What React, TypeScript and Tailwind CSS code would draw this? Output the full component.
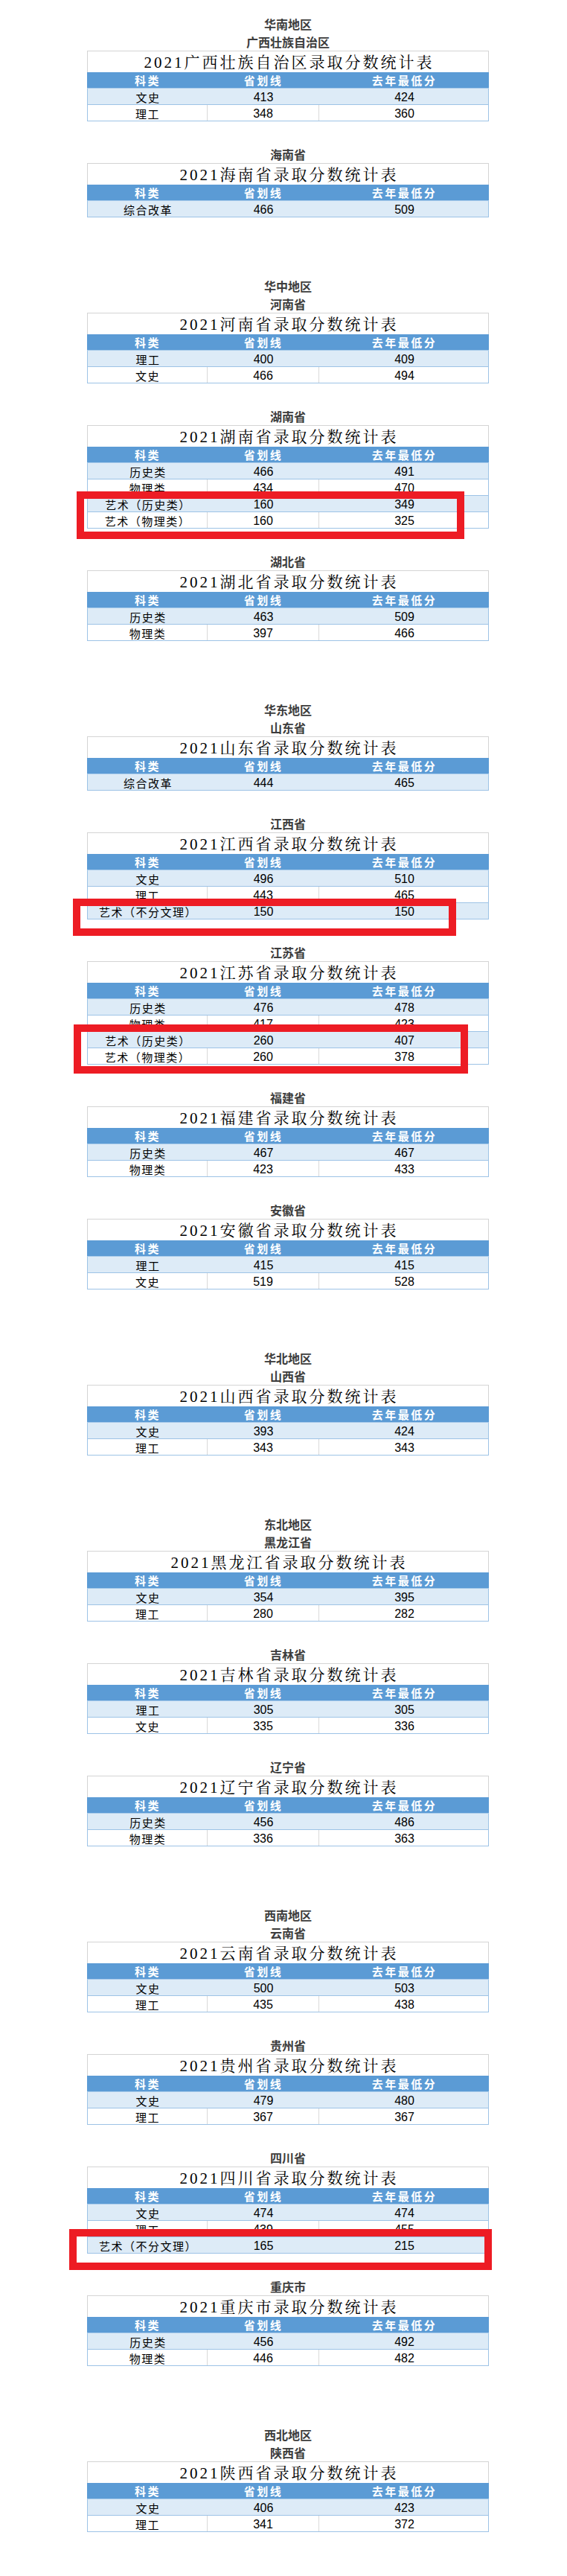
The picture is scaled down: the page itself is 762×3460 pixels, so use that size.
import React from "react";

type Row = [string, string, string];
type Mark = string;
type Province = { name: string; title: string; rows: Row[]; mark?: Mark };
type Region = { name: string; provinces: Province[] };

const regions: Region[] = [
  {
    name: "华南地区",
    provinces: [
      {
        name: "广西壮族自治区",
        title: "2021广西壮族自治区录取分数统计表",
        rows: [
          ["文史", "413", "424"],
          ["理工", "348", "360"],
        ],
      },
      {
        name: "海南省",
        title: "2021海南省录取分数统计表",
        rows: [["综合改革", "466", "509"]],
      },
    ],
  },
  {
    name: "华中地区",
    provinces: [
      {
        name: "河南省",
        title: "2021河南省录取分数统计表",
        rows: [
          ["理工", "400", "409"],
          ["文史", "466", "494"],
        ],
      },
      {
        name: "湖南省",
        title: "2021湖南省录取分数统计表",
        rows: [
          ["历史类", "466", "491"],
          ["物理类", "434", "470"],
          ["艺术（历史类）", "160", "349"],
          ["艺术（物理类）", "160", "325"],
        ],
        mark: "left-[-14px] top-[89px] w-[521px] h-[64px]",
      },
      {
        name: "湖北省",
        title: "2021湖北省录取分数统计表",
        rows: [
          ["历史类", "463", "509"],
          ["物理类", "397", "466"],
        ],
      },
    ],
  },
  {
    name: "华东地区",
    provinces: [
      {
        name: "山东省",
        title: "2021山东省录取分数统计表",
        rows: [["综合改革", "444", "465"]],
      },
      {
        name: "江西省",
        title: "2021江西省录取分数统计表",
        rows: [
          ["文史", "496", "510"],
          ["理工", "443", "465"],
          ["艺术（不分文理）", "150", "150"],
        ],
        mark: "left-[-19px] top-[89px] w-[515px] h-[50px]",
      },
      {
        name: "江苏省",
        title: "2021江苏省录取分数统计表",
        rows: [
          ["历史类", "476", "478"],
          ["物理类", "417", "423"],
          ["艺术（历史类）", "260", "407"],
          ["艺术（物理类）", "260", "378"],
        ],
        mark: "left-[-18px] top-[85px] w-[530px] h-[66px]",
      },
      {
        name: "福建省",
        title: "2021福建省录取分数统计表",
        rows: [
          ["历史类", "467", "467"],
          ["物理类", "423", "433"],
        ],
      },
      {
        name: "安徽省",
        title: "2021安徽省录取分数统计表",
        rows: [
          ["理工", "415", "415"],
          ["文史", "519", "528"],
        ],
      },
    ],
  },
  {
    name: "华北地区",
    provinces: [
      {
        name: "山西省",
        title: "2021山西省录取分数统计表",
        rows: [
          ["文史", "393", "424"],
          ["理工", "343", "343"],
        ],
      },
    ],
  },
  {
    name: "东北地区",
    provinces: [
      {
        name: "黑龙江省",
        title: "2021黑龙江省录取分数统计表",
        rows: [
          ["文史", "354", "395"],
          ["理工", "280", "282"],
        ],
      },
      {
        name: "吉林省",
        title: "2021吉林省录取分数统计表",
        rows: [
          ["理工", "305", "305"],
          ["文史", "335", "336"],
        ],
      },
      {
        name: "辽宁省",
        title: "2021辽宁省录取分数统计表",
        rows: [
          ["历史类", "456", "486"],
          ["物理类", "336", "363"],
        ],
      },
    ],
  },
  {
    name: "西南地区",
    provinces: [
      {
        name: "云南省",
        title: "2021云南省录取分数统计表",
        rows: [
          ["文史", "500", "503"],
          ["理工", "435", "438"],
        ],
      },
      {
        name: "贵州省",
        title: "2021贵州省录取分数统计表",
        rows: [
          ["文史", "479", "480"],
          ["理工", "367", "367"],
        ],
      },
      {
        name: "四川省",
        title: "2021四川省录取分数统计表",
        rows: [
          ["文史", "474", "474"],
          ["理工", "439", "455"],
          ["艺术（不分文理）", "165", "215"],
        ],
        mark: "left-[-24px] top-[84px] w-[568px] h-[55px]",
      },
      {
        name: "重庆市",
        title: "2021重庆市录取分数统计表",
        rows: [
          ["历史类", "456", "492"],
          ["物理类", "446", "482"],
        ],
      },
    ],
  },
  {
    name: "西北地区",
    provinces: [
      {
        name: "陕西省",
        title: "2021陕西省录取分数统计表",
        rows: [
          ["文史", "406", "423"],
          ["理工", "341", "372"],
        ],
      },
    ],
  },
];

function Label({ text }: { text: string }) {
  return (
    <div className="h-[24px] flex items-center justify-center text-[16px] leading-none font-bold text-[#3c3c3c] font-['Microsoft_YaHei','Noto_Sans_CJK_SC',sans-serif]">
      {text}
    </div>
  );
}

function Table({ p }: { p: Province }) {
  return (
    <div className="relative w-[540px]">
      <div className="h-[29px] border-t border-x border-[#d4d4d4] bg-white flex items-center justify-center pl-[3px] pt-[2px] text-[21px] leading-none tracking-[3px] text-black font-['Liberation_Serif','Noto_Serif_CJK_SC','Noto_Sans_CJK_SC',serif]">
        {p.title}
      </div>
      <div className="grid grid-cols-[161px_150px_229px] h-[22px] bg-[#5b9bd5] border-b border-[#a9cbea] text-white font-bold text-[15px] leading-none tracking-[2.5px] font-['Microsoft_YaHei','Noto_Sans_CJK_SC',sans-serif]">
        <div className="flex items-center justify-center pl-[2px]">科类</div>
        <div className="flex items-center justify-center pl-[2px]">省划线</div>
        <div className="flex items-center justify-center pl-[2px]">去年最低分</div>
      </div>
      {p.rows.map((r, i) => {
        const odd = i % 2 === 1;
        return (
          <div
            key={i}
            className={
              "grid grid-cols-[161px_150px_229px] h-[22px] border-x border-b border-[#9dc3e6] text-black leading-none " +
              (odd ? "bg-white" : "bg-[#ddebf7]")
            }
          >
            <div
              className={
                "flex items-center justify-center pt-[2px] pl-[1px] text-[15px] tracking-[1.5px] font-['Noto_Sans_CJK_SC',sans-serif] " +
                (odd ? "border-r border-[#d9d9d9]" : "")
              }
            >
              {r[0]}
            </div>
            <div
              className={
                "flex items-center justify-center pt-[2px] text-[16px] font-['Liberation_Sans',sans-serif] " +
                (odd ? "border-r border-[#d9d9d9]" : "")
              }
            >
              {r[1]}
            </div>
            <div className="flex items-center justify-center pt-[2px] text-[16px] font-['Liberation_Sans',sans-serif]">
              {r[2]}
            </div>
          </div>
        );
      })}
      {p.mark && (
        <div className={"absolute border-[10px] border-[#ed1c24] " + p.mark} />
      )}
    </div>
  );
}

export default function App() {
  return (
    <div className="w-[762px] bg-white flex flex-col items-center pl-[12px] pt-[20px] pb-[56px]">
      {regions.map((reg, ri) => (
        <div key={reg.name} className={"flex flex-col items-center " + (ri === 0 ? "" : "mt-[80px]")}>
          <Label text={reg.name} />
          {reg.provinces.map((p, pi) => (
            <div key={p.name} className={"flex flex-col items-center " + (pi === 0 ? "" : "mt-[32px]")}>
              <Label text={p.name} />
              <Table p={p} />
            </div>
          ))}
        </div>
      ))}
    </div>
  );
}
